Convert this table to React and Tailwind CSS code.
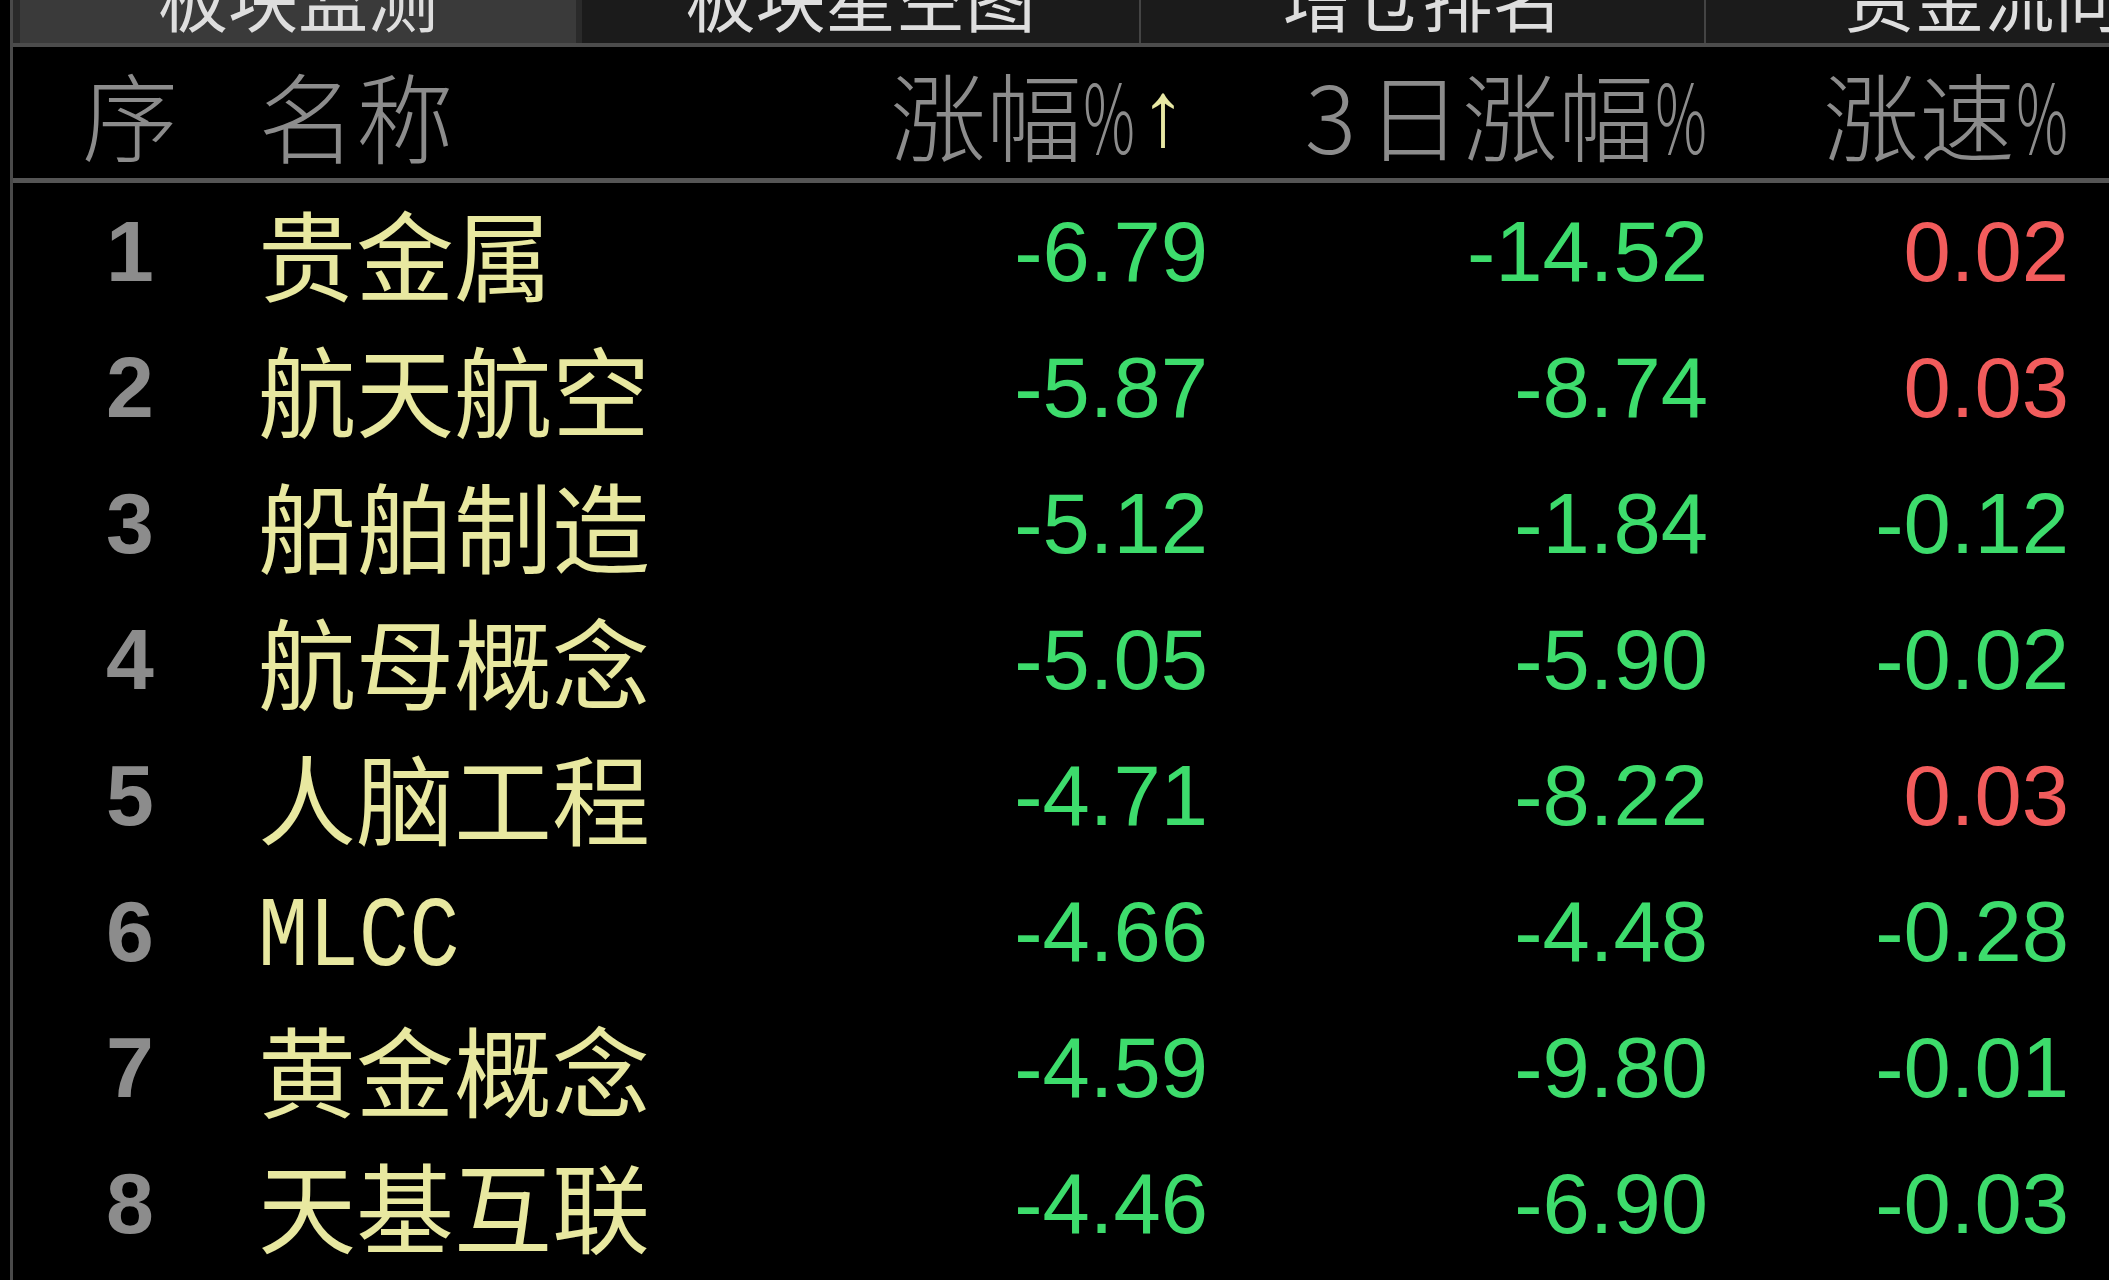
import React from "react";

const rows = [
  { n: "1", name: "贵金属", a: "-6.79", b: "-14.52", c: "0.02" },
  { n: "2", name: "航天航空", a: "-5.87", b: "-8.74", c: "0.03" },
  { n: "3", name: "船舶制造", a: "-5.12", b: "-1.84", c: "-0.12" },
  { n: "4", name: "航母概念", a: "-5.05", b: "-5.90", c: "-0.02" },
  { n: "5", name: "人脑工程", a: "-4.71", b: "-8.22", c: "0.03" },
  { n: "6", name: "MLCC", a: "-4.66", b: "-4.48", c: "-0.28", latin: true },
  { n: "7", name: "黄金概念", a: "-4.59", b: "-9.80", c: "-0.01" },
  { n: "8", name: "天基互联", a: "-4.46", b: "-6.90", c: "-0.03" },
];

const CJK = "font-['Noto_Sans_CJK_SC','Noto_Sans',sans-serif]";
const NUM = "font-['Liberation_Sans',Arial,sans-serif]";
const MONO = "font-['Liberation_Mono','Courier_New',monospace]";

function Tab({ label, active, className }) {
  return (
    <div
      className={
        "h-[43px] overflow-hidden flex justify-center shrink-0 " +
        (active ? "bg-[#3a3a3a] " : "bg-[#1b1b1b] ") +
        className
      }
    >
      <span
        className={
          "text-[70px] leading-none text-[#dedede] -mt-[38px] whitespace-nowrap " + CJK
        }
      >
        {label}
      </span>
    </div>
  );
}

function Pct() {
  return (
    <span className="inline-flex w-[54px] justify-center">
      <span className="inline-block scale-x-[0.6]">%</span>
    </span>
  );
}

export default function App() {
  return (
    <div className="w-[2109px] h-[1280px] bg-black overflow-hidden pl-[10px]">
      <div className="h-full border-l-[3px] border-[#4a4a4a] flex flex-col">
        {/* tabs */}
        <div className="flex h-[43px] bg-[#2a2a2a] pl-[7px] gap-[6px] overflow-hidden">
          <Tab label="板块监测" active className="w-[556px]" />
          <div className="flex">
            <Tab label="板块星空图" className="w-[557px]" />
            <div className="w-[2px] bg-[#444] h-full" />
            <Tab label="增仓排名" className="w-[563px]" />
            <div className="w-[2px] bg-[#444] h-full" />
            <Tab label="资金流向" className="w-[557px]" />
          </div>
        </div>
        <div className="h-[4px] bg-[#4c4c4c]" />
        {/* header */}
        <div
          className={
            "flex items-center h-[131px] text-[#8c8c8c] leading-none text-[96px] font-light " +
            CJK
          }
        >
          <div className="w-[234px] text-center">序</div>
          <div className="w-[453px] pl-[11px] text-[98px]">名称</div>
          <div className="w-[508px] flex justify-end items-center pr-[22px]">
            <span className="flex items-center">
              涨幅
              <Pct />
            </span>
            <span
              className={"text-[92px] text-[#e8e8a4] font-bold ml-[4px] " + NUM}
            >
              ↑
            </span>
          </div>
          <div className="w-[500px] flex justify-end items-center">
            <span className="mr-[10px]">3</span>
            日涨幅
            <Pct />
          </div>
          <div className="w-[361px] flex justify-end items-center">
            涨速
            <Pct />
          </div>
        </div>
        <div className="h-[5px] bg-[#555]" />
        {/* rows */}
        <div className="flex flex-col">
          {rows.map((r) => {
            const cColor = r.c.startsWith("-") ? "text-[#3ddc6c]" : "text-[#f25c5c]";
            return (
              <div key={r.n} className="flex items-center h-[136px] leading-none">
                <div
                  className={
                    "w-[234px] text-center text-[86px] font-bold text-[#8c8c8c] " + NUM
                  }
                >
                  {r.n}
                </div>
                <div className="w-[453px] pl-[11px] text-[#e8e8a0]">
                  {r.latin ? (
                    <span
                      className={
                        "inline-block text-[84px] scale-y-[1.2] translate-y-[8px] " + MONO
                      }
                    >
                      {r.name}
                    </span>
                  ) : (
                    <span className={"text-[98px] " + CJK}>{r.name}</span>
                  )}
                </div>
                <div className={"w-[508px] text-right text-[85px] text-[#3ddc6c] " + NUM}>
                  {r.a}
                </div>
                <div className={"w-[500px] text-right text-[85px] text-[#3ddc6c] " + NUM}>
                  {r.b}
                </div>
                <div className={"w-[361px] text-right text-[85px] " + cColor + " " + NUM}>
                  {r.c}
                </div>
              </div>
            );
          })}
        </div>
      </div>
    </div>
  );
}
